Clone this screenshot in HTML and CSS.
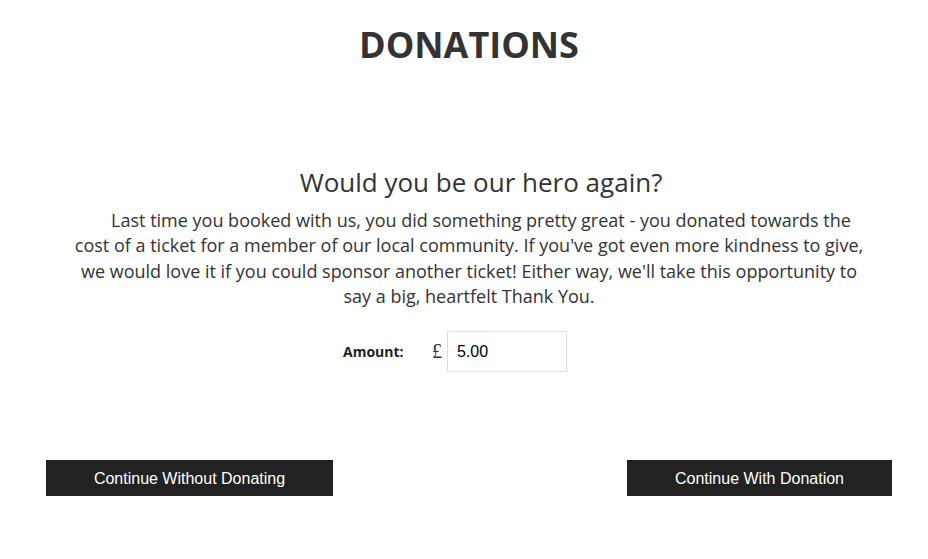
FILE: index.html
```html
<!DOCTYPE html>
<html>
<head>
<meta charset="utf-8">
<link rel="stylesheet" href="styles.css">
</head>
<body>
<div class="page">
  <h1 class="title">DONATIONS</h1>
  <section class="ask">
    <h2 class="ask-heading">Would you be our hero again?</h2>
    <p class="ask-text">Last time you booked with us, you did something pretty great - you donated towards the cost of a ticket for a member of our local community. If you've got even more kindness to give, we would love it if you could sponsor another ticket! Either way, we'll take this opportunity to say a big, heartfelt Thank You.</p>
    <div class="amount-row">
      <label class="amount-label" for="amount">Amount:</label>
      <span class="currency">£</span>
      <input id="amount" class="amount-input" type="text" value="5.00">
    </div>
  </section>
  <div class="actions">
    <button class="btn btn-without">Continue Without Donating</button>
    <button class="btn btn-with">Continue With Donation</button>
  </div>
</div>
</body>
</html>
```
FILE: styles.css
```css
html, body {
  margin: 0;
  padding: 0;
  background: #fff;
}
body {
  font-family: "Open Sans", "Liberation Sans", sans-serif;
  color: #333;
}
.page {
  width: 846px;
  margin-left: 46px;
  display: flex;
  flex-direction: column;
  align-items: center;
}
.title {
  margin: 21px 0 0;
  font-size: 36px;
  font-weight: 700;
  line-height: 48px;
}
.ask {
  margin-top: 95px;
  width: 800px;
  text-align: center;
  text-indent: 24px;
}
.ask-heading {
  margin: 0;
  font-size: 26px;
  font-weight: 400;
  line-height: 36px;
}
.ask-text {
  margin: 8px 0 0;
  font-size: 18px;
  line-height: 25.4px;
}
.amount-row {
  margin: 21px 28px 0 0;
  text-indent: 0;
  display: flex;
  justify-content: center;
  align-items: center;
}
.amount-label {
  font-size: 14px;
  font-weight: 700;
  width: 89px;
  text-align: left;
  color: #222;
}
.currency {
  font-family: "Liberation Serif", serif;
  font-size: 20px;
  width: 15px;
  text-align: left;
  color: #333;
}
.amount-input {
  box-sizing: border-box;
  width: 120px;
  height: 41px;
  border: 1px solid #ddd;
  padding: 2px 9px 0;
  font-family: "Liberation Sans", Arial, sans-serif;
  font-size: 16px;
  color: #000;
  outline: none;
}
.actions {
  align-self: stretch;
  display: flex;
  justify-content: space-between;
  margin-top: 88px;
}
.btn {
  height: 36px;
  border: none;
  background: #222;
  color: #fff;
  font-family: "Liberation Sans", Arial, sans-serif;
  font-size: 16px;
  padding: 2px 0 0;
}
.btn-without { width: 287px; }
.btn-with { width: 265px; }
```
